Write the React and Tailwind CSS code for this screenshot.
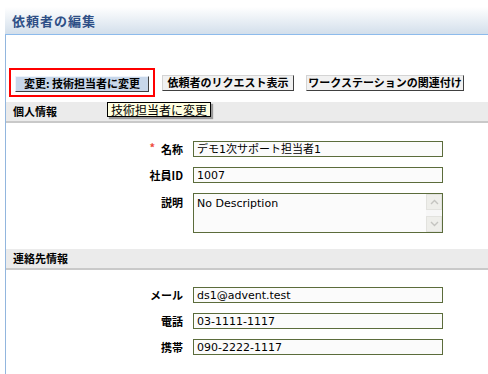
import React from 'react';

const jp = { fontFamily: '"Noto Sans CJK JP", "DejaVu Sans", sans-serif' };
const field = { fontFamily: '"DejaVu Sans", "Noto Sans CJK JP", sans-serif' };

const SectionBar = ({ title }) => (
  <div className="h-[21px] bg-[#ebebeb] border-b-2 border-[#c9c9c9] flex items-center pl-[7px]">
    <span className="text-[11px] font-bold text-black leading-none">{title}</span>
  </div>
);

const Row = ({ label, value, required }) => (
  <div className="flex items-center h-[16px]">
    <div className="w-[177px] flex justify-end items-center text-[11px] font-bold text-black leading-none">
      {required && <span className="text-[#ee4b3c] text-[11px] mr-[6px] -mt-[4px]">*</span>}
      <span>{label}</span>
    </div>
    <div
      className="ml-[10px] w-[250px] h-[16px] border border-[#5b6c3b] bg-[#fbfbfb] flex items-center pl-[3px] text-[11px] text-black leading-none"
      style={field}
    >
      {value}
    </div>
  </div>
);

const Button = ({ children, className }) => (
  <div
    className={`h-[16px] flex items-center justify-center text-[11px] font-bold leading-none text-black border border-t-[#d4d4d4] border-l-[#d4d4d4] border-r-[#404040] border-b-[#404040] ${className}`}
  >
    {children}
  </div>
);

export default function App() {
  return (
    <div className="w-[488px] h-[374px] overflow-hidden bg-white relative" style={jp}>
      {/* Page title */}
      <div className="h-[35px] ml-[5px] bg-gradient-to-b from-white from-20% to-[#d3dfeb] border-b border-[#8dbbec] flex items-end pb-[7px] pl-[7px]">
        <h1 className="text-[13px] font-bold text-[#2e4f86] leading-none tracking-[1px]">依頼者の編集</h1>
      </div>

      <div className="ml-[5px] border-l border-[#92b6de] h-[339px]">
        {/* Action buttons */}
        <div className="pt-[33px] flex items-center">
          <div className="ml-[3px] w-[146px] h-[29px] border-2 border-[#ff0000] flex items-center pl-[4px] pt-[2px]">
            <Button className="w-[134px] bg-[#c8d7ea] border-t-[#eef3fa] border-l-[#eef3fa]">変更: 技術担当者に変更</Button>
          </div>
          <Button className="ml-[7px] w-[132px] bg-[#f1f1f1]">依頼者のリクエスト表示</Button>
          <Button className="ml-[12px] w-[158px] bg-[#f1f1f1]">ワークステーションの関連付け</Button>
        </div>

        <div className="mt-[5px]">
          <SectionBar title="個人情報" />
        </div>

        <div className="mt-[18px] flex flex-col gap-[10px]">
          <Row required label="名称" value="デモ1次サポート担当者1" />
          <Row label="社員ID" value="1007" />
          <div className="flex items-start">
            <div className="w-[177px] pt-[4px] text-right text-[11px] font-bold text-black leading-none">説明</div>
            <div className="ml-[10px] w-[250px] h-[40px] border border-[#5b6c3b] bg-[#fbfbfb] flex">
              <div className="flex-1 pl-[3px] pt-[4px] text-[11px] text-black leading-none" style={field}>
                No Description
              </div>
              <div className="w-[16px] flex flex-col justify-between bg-[#f7f7f7]">
                <div className="h-[16px] bg-[#eeeeea] border border-[#e2e2de] flex items-center justify-center">
                  <svg width="9" height="6" viewBox="0 0 9 6"><path d="M1 5 L4.5 1.5 L8 5" fill="none" stroke="#c4c4c0" strokeWidth="1.4" /></svg>
                </div>
                <div className="h-[16px] bg-[#eeeeea] border border-[#e2e2de] flex items-center justify-center">
                  <svg width="9" height="6" viewBox="0 0 9 6"><path d="M1 1 L4.5 4.5 L8 1" fill="none" stroke="#c4c4c0" strokeWidth="1.4" /></svg>
                </div>
              </div>
            </div>
          </div>
        </div>

        <div className="mt-[16px]">
          <SectionBar title="連絡先情報" />
        </div>

        <div className="mt-[17px] flex flex-col gap-[10px]">
          <Row label="メール" value="ds1@advent.test" />
          <Row label="電話" value="03-1111-1117" />
          <Row label="携帯" value="090-2222-1117" />
        </div>
      </div>

      {/* Tooltip */}
      <div className="absolute left-[107px] top-[102px] h-[15px] px-[3px] border border-black bg-[#ffffe1] text-[12px] leading-none text-black flex items-center shadow-[2px_2px_1px_rgba(0,0,0,0.35)]">
        技術担当者に変更
      </div>
    </div>
  );
}
